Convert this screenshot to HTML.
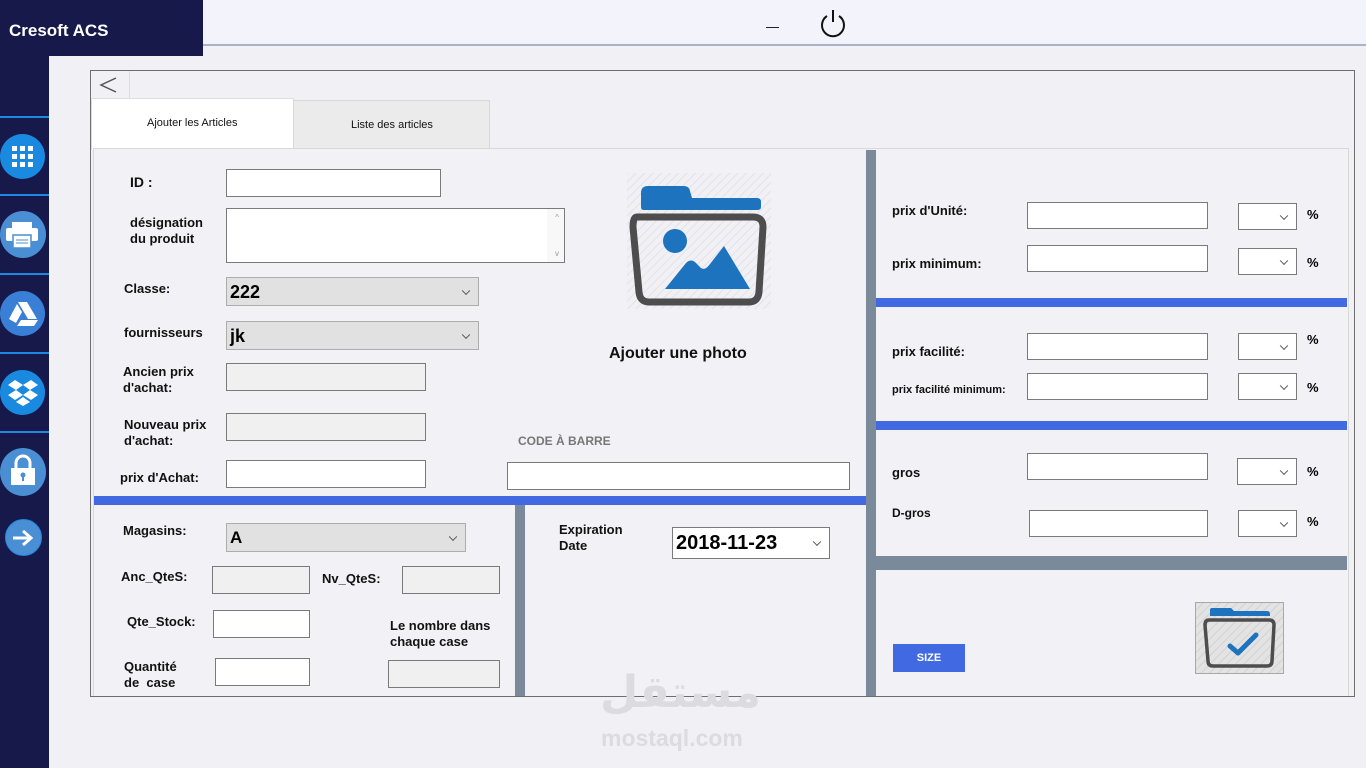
<!DOCTYPE html>
<html><head><meta charset="utf-8"><style>
*{box-sizing:border-box;margin:0;padding:0}
body{width:1366px;height:768px;overflow:hidden;background:#f0f0f5;font-family:"Liberation Sans","DejaVu Sans",sans-serif;position:relative}
.a{position:absolute}
.lb{position:absolute;font-weight:bold;font-size:13px;color:#111;line-height:16px}
.in{position:absolute;background:#fff;border:1px solid #7a7a7a}
.gr{position:absolute;background:#f0f0f0;border:1px solid #7a7a7a}
.cb{position:absolute;background:#e1e1e1;border:1px solid #adadad;font-weight:bold;font-size:18px;padding:4px 0 0 3px;color:#000}
.cb:after,.dd:after{content:"";position:absolute;right:9px;top:50%;width:5px;height:5px;border-right:1px solid #555;border-bottom:1px solid #555;transform:translateY(-70%) rotate(45deg)}
.dd{position:absolute;background:#fff;border:1px solid #7a7a7a}
.pc{position:absolute;font-weight:bold;font-size:13px}
.blue{position:absolute;background:#4169e1}
.grey{position:absolute;background:#7a8a9a}
.sep{position:absolute;left:0;width:49px;height:2px;background:#1e88e5}
.ic{position:absolute;left:0;width:45px;height:45px;border-radius:50%;background:#3d8bd9}
</style></head><body>
<div class="a" style="left:0;top:0;width:49px;height:768px;background:#16194a"></div>
<div class="a" style="left:0;top:0;width:203px;height:56px;background:#16194a"></div>
<div class="a" style="left:9px;top:21px;color:#fff;font-weight:bold;font-size:17px">Cresoft ACS</div>
<div class="a" style="left:203px;top:0;width:1163px;height:44px;background:#f3f4fb"></div>
<div class="a" style="left:203px;top:44px;width:1163px;height:2px;background:#a9b4c8"></div>
<div class="a" style="left:766px;top:27px;width:13px;height:1px;background:#222"></div>
<svg class="a" style="left:818px;top:6px" width="30" height="34" viewBox="0 0 30 34"><path d="M9 10 A11 11 0 1 0 21 10" fill="none" stroke="#111" stroke-width="2"/><path d="M15 4 V16" stroke="#111" stroke-width="2"/></svg>

<div class="sep" style="top:116px"></div><div class="sep" style="top:194px"></div><div class="sep" style="top:273px"></div><div class="sep" style="top:352px"></div><div class="sep" style="top:431px"></div>
<div class="ic" style="top:134px;background:#1a8ae0"></div>
<svg class="a" style="left:12px;top:146px" width="22" height="22"><g fill="#fff"><rect x="0" y="0" width="5" height="5"/><rect x="8" y="0" width="5" height="5"/><rect x="16" y="0" width="5" height="5"/><rect x="0" y="8" width="5" height="5"/><rect x="8" y="8" width="5" height="5"/><rect x="16" y="8" width="5" height="5"/><rect x="0" y="16" width="5" height="5"/><rect x="8" y="16" width="5" height="5"/><rect x="16" y="16" width="5" height="5"/></g></svg>
<div class="ic" style="top:211px;width:46px;height:47px;background:#4a8ed3"></div>
<svg class="a" style="left:6px;top:222px" width="32" height="26"><rect x="6" y="0" width="20" height="6" fill="#fff"/><rect x="0" y="6" width="32" height="13" rx="2" fill="#fff"/><rect x="7" y="13" width="18" height="13" fill="#fff" stroke="#4a8ed3" stroke-width="1.5"/><path d="M10 18h12M10 21h12" stroke="#4a8ed3"/></svg>
<div class="ic" style="top:291px;background:#3a7fd6"></div>
<svg class="a" style="left:8px;top:302px" width="30" height="24"><path d="M10 0h9l10 17h-9z" fill="#fff"/><path d="M9 2l5 8-6 11-7-4z" fill="#fff"/><path d="M9 24l4-6h17l-4 6z" fill="#fff"/></svg>
<div class="ic" style="top:370px;background:#1a8ae0"></div>
<svg class="a" style="left:8px;top:378px" width="30" height="30"><g fill="#fff"><path d="M7 2l8 5-7 5-8-5z"/><path d="M23 2l-8 5 7 5 8-5z"/><path d="M8 12l7 5-8 5-7-5z"/><path d="M22 12l-7 5 8 5 7-5z"/><path d="M8 24l7 4 7-4-7-5z"/></g></svg>
<div class="ic" style="top:448px;width:46px;height:48px;background:#4a8ed3"></div>
<svg class="a" style="left:9px;top:454px" width="28" height="32"><path d="M7 14V9a7 7 0 0 1 14 0v5" fill="none" stroke="#fff" stroke-width="3"/><rect x="2" y="14" width="24" height="17" fill="#fff"/><circle cx="14" cy="21" r="2.5" fill="#4a8ed3"/><rect x="13" y="22" width="2" height="5" fill="#4a8ed3"/></svg>
<div class="ic" style="top:519px;left:5px;width:37px;height:37px;background:#4a8ed3;border:1px solid #1e88e5"></div>
<svg class="a" style="left:11px;top:528px" width="24" height="20"><path d="M2 10h18M12 3l8 7-8 7" fill="none" stroke="#fff" stroke-width="3"/></svg>

<div class="a" style="left:90px;top:70px;width:1265px;height:627px;border:1px solid #6e6e6e;background:#f0f0f5"></div>
<div class="a" style="left:91px;top:71px;width:39px;height:27px;border-right:1px solid #ddd;background:#f0f0f5"></div>
<svg class="a" style="left:99px;top:76px" width="20" height="18"><path d="M17 2L2 9l15 7" fill="none" stroke="#555" stroke-width="1.5"/></svg>
<div class="a" style="left:91px;top:98px;width:203px;height:52px;background:#fff;border:1px solid #ddd;border-bottom:none"></div>
<div class="a" style="left:147px;top:117px;font-size:11px;color:#111">Ajouter les Articles</div>
<div class="a" style="left:293px;top:100px;width:197px;height:49px;background:#ebebeb;border:1px solid #d8d8d8;border-bottom:none"></div>
<div class="a" style="left:351px;top:119px;font-size:11px;color:#111">Liste des articles</div>
<div class="a" style="left:93px;top:148px;width:1256px;height:548px;background:#f1f1f6;border:1px solid #d8d8d8;border-bottom:none"></div>

<div class="lb" style="left:130px;top:174px;font-size:14px">ID :</div>
<div class="in" style="left:226px;top:169px;width:215px;height:28px"></div>
<div class="lb" style="left:130px;top:215px">désignation<br>du produit</div>
<div class="in" style="left:226px;top:208px;width:339px;height:55px"><div class="a" style="right:0;top:0;width:17px;height:53px;background:#f8f8f8"></div><div class="a" style="right:5px;top:4px;font-size:8px;color:#999">^</div><div class="a" style="right:5px;bottom:4px;font-size:8px;color:#999">v</div></div>
<div class="lb" style="left:124px;top:281px">Classe:</div>
<div class="cb" style="left:226px;top:277px;width:253px;height:29px">222</div>
<div class="lb" style="left:124px;top:325px">fournisseurs</div>
<div class="cb" style="left:226px;top:321px;width:253px;height:29px">jk</div>
<div class="lb" style="left:123px;top:364px">Ancien prix<br>d'achat:</div>
<div class="gr" style="left:226px;top:363px;width:200px;height:28px"></div>
<div class="lb" style="left:124px;top:417px">Nouveau prix<br>d'achat:</div>
<div class="gr" style="left:226px;top:413px;width:200px;height:28px"></div>
<div class="lb" style="left:120px;top:470px">prix d'Achat:</div>
<div class="in" style="left:226px;top:460px;width:200px;height:28px"></div>

<svg class="a" style="left:627px;top:173px" width="144" height="136" viewBox="0 0 144 136"><defs><pattern id="st" width="6" height="6" patternUnits="userSpaceOnUse" patternTransform="rotate(45)"><rect width="6" height="6" fill="#f0f0f5"/><rect width="1" height="6" fill="#e2e2e8"/></pattern></defs><rect width="144" height="136" fill="url(#st)"/><path d="M14 34 V20 q0-7 7-7 h36 q5 0 6 5 l2 7 h65 q4 0 4 4 v5 q0 3-4 3 H17 q-3 0-3-3z" fill="#1e73be"/><path d="M10 44 h116 q10 0 10 10 l-4 65 q-1 10-10 10 H22 q-9 0-10-10 L6 54 q0-10 4-10z" fill="none" stroke="#4d4d4d" stroke-width="7"/><circle cx="48" cy="68" r="12" fill="#1e73be"/><path d="M38 116 L59 90 q5-5 10 0 l5 5 q4 3 9-4 l14-18 L123 116z" fill="#1e73be"/></svg>
<div class="a" style="left:609px;top:345px;font-weight:bold;font-size:16px;color:#111">Ajouter une photo</div>
<div class="a" style="left:518px;top:434px;font-weight:bold;font-size:12px;color:#777">CODE À BARRE</div>
<div class="in" style="left:507px;top:462px;width:343px;height:28px"></div>

<div class="blue" style="left:94px;top:496px;width:772px;height:9px"></div>
<div class="grey" style="left:866px;top:150px;width:10px;height:546px"></div>
<div class="grey" style="left:515px;top:505px;width:10px;height:191px"></div>

<div class="lb" style="left:123px;top:523px">Magasins:</div>
<div class="cb" style="left:226px;top:523px;width:240px;height:29px;font-size:17px">A</div>
<div class="lb" style="left:121px;top:569px">Anc_QteS:</div>
<div class="gr" style="left:212px;top:566px;width:98px;height:28px"></div>
<div class="lb" style="left:322px;top:571px">Nv_QteS:</div>
<div class="gr" style="left:402px;top:566px;width:98px;height:28px"></div>
<div class="lb" style="left:127px;top:614px">Qte_Stock:</div>
<div class="in" style="left:213px;top:610px;width:97px;height:28px"></div>
<div class="lb" style="left:390px;top:618px">Le nombre dans<br>chaque case</div>
<div class="lb" style="left:124px;top:659px">Quantité<br>de&nbsp; case</div>
<div class="in" style="left:215px;top:658px;width:95px;height:28px"></div>
<div class="gr" style="left:388px;top:660px;width:112px;height:28px"></div>

<div class="lb" style="left:559px;top:522px">Expiration<br>Date</div>
<div class="dd" style="left:672px;top:527px;width:158px;height:32px;font-weight:bold;font-size:20px;padding:4px 0 0 3px">2018-11-23</div>

<div class="lb" style="left:892px;top:203px">prix d'Unité:</div>
<div class="in" style="left:1027px;top:202px;width:181px;height:27px"></div>
<div class="dd" style="left:1238px;top:203px;width:59px;height:27px"></div><div class="pc" style="left:1307px;top:207px">%</div>
<div class="lb" style="left:892px;top:256px">prix minimum:</div>
<div class="in" style="left:1027px;top:245px;width:181px;height:27px"></div>
<div class="dd" style="left:1238px;top:248px;width:59px;height:27px"></div><div class="pc" style="left:1307px;top:255px">%</div>
<div class="blue" style="left:876px;top:298px;width:471px;height:9px"></div>
<div class="lb" style="left:892px;top:344px">prix facilité:</div>
<div class="in" style="left:1027px;top:333px;width:181px;height:27px"></div>
<div class="dd" style="left:1238px;top:333px;width:59px;height:27px"></div><div class="pc" style="left:1307px;top:332px">%</div>
<div class="lb" style="left:892px;top:382px;font-size:11px">prix facilité minimum:</div>
<div class="in" style="left:1027px;top:373px;width:181px;height:27px"></div>
<div class="dd" style="left:1238px;top:373px;width:59px;height:27px"></div><div class="pc" style="left:1307px;top:380px">%</div>
<div class="blue" style="left:876px;top:421px;width:471px;height:9px"></div>
<div class="lb" style="left:892px;top:465px">gros</div>
<div class="in" style="left:1027px;top:453px;width:181px;height:27px"></div>
<div class="dd" style="left:1237px;top:458px;width:60px;height:27px"></div><div class="pc" style="left:1307px;top:464px">%</div>
<div class="lb" style="left:892px;top:505px;font-size:12px">D-gros</div>
<div class="in" style="left:1029px;top:510px;width:179px;height:27px"></div>
<div class="dd" style="left:1238px;top:510px;width:59px;height:27px"></div><div class="pc" style="left:1307px;top:514px">%</div>
<div class="grey" style="left:876px;top:556px;width:471px;height:14px"></div>
<div class="a" style="left:893px;top:644px;width:72px;height:28px;background:#4169e1;color:#fff;font-weight:bold;font-size:11px;text-align:center;line-height:28px">SIZE</div>
<svg class="a" style="left:1195px;top:602px" width="89" height="72" viewBox="0 0 89 72"><defs><pattern id="s2" width="6" height="6" patternUnits="userSpaceOnUse" patternTransform="rotate(45)"><rect width="6" height="6" fill="#e3e3e3"/><rect width="1" height="6" fill="#d2d2d2"/></pattern></defs><rect x=".5" y=".5" width="88" height="71" fill="url(#s2)" stroke="#a8a8a8"/><path d="M15 13 V8 q0-2 2-2 h19 l3 3 h33 q3 0 3 3 v2 H15z" fill="#1e73be"/><path d="M14 18 h60 q5 0 5 5 l-2 36 q0 5-5 5 H18 q-5 0-5-5 L10 23 q0-5 4-5z" fill="none" stroke="#4d4d4d" stroke-width="3.5"/><path d="M35 44 l8 7 L61 33" fill="none" stroke="#1e73be" stroke-width="5" stroke-linecap="round" stroke-linejoin="round"/></svg>

<div class="a" style="left:600px;top:668px;font-family:'DejaVu Sans',sans-serif;font-weight:bold;font-size:44px;color:#dcdce0;direction:rtl;line-height:50px">مستقل</div>
<div class="a" style="left:601px;top:725px;font-weight:bold;font-size:23px;color:#dcdce0">mostaql.com</div>
</body></html>
